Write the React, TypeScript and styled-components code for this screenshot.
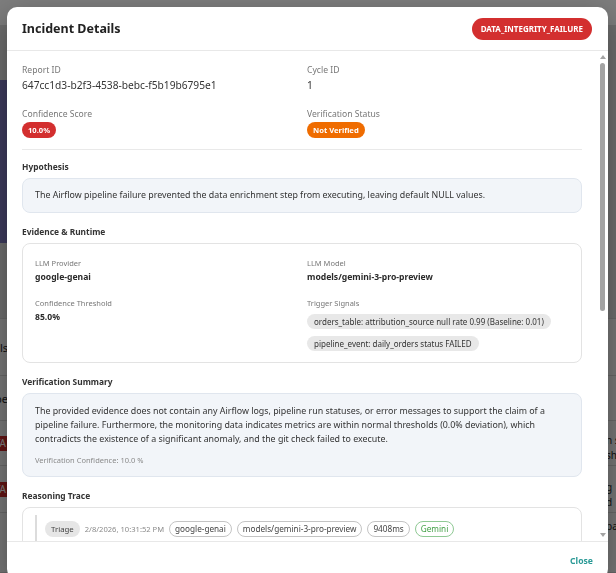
import React from "react";
import styled, { createGlobalStyle } from "styled-components";

const GlobalStyle = createGlobalStyle`
  * { box-sizing: border-box; }
  html, body { margin: 0; padding: 0; height: 100%; overflow: hidden; }
  body { font-family: "Noto Sans", "Open Sans", sans-serif; color: #333; background: #dedede; }
`;

/* ---------- page behind the dialog ---------- */
const BgPage = styled.div`
  height: 573px;
  display: flex;
  flex-direction: column;
  background: #dcdcdc;
  overflow: hidden;
`;
const BgTopBar = styled.div`
  height: 25px;
  flex: none;
  background: #fafafa;
`;
const BgHeroArea = styled.div`
  height: 293px;
  flex: none;
  padding-top: 55px;
  display: flex;
`;
const BgHero = styled.div`
  width: 320px;
  height: 163px;
  background: #7b76ba;
`;
const BgTable = styled.div`
  flex: 1;
  display: flex;
  flex-direction: column;
  background: #eeeeee;
  border-top: 1px solid #cfcfcf;
`;
const BgRow = styled.div<{ $h: number }>`
  height: ${(p) => p.$h}px;
  flex: none;
  display: grid;
  grid-template-columns: 8px 598px 10px;
  align-items: center;
  border-bottom: 1px solid #cfcfcf;
  font-size: 11px;
  color: #222;
`;
const BgStub = styled.div`
  overflow: hidden;
  display: flex;
  justify-content: flex-end;
  white-space: nowrap;
`;
const BgRedTag = styled.span`
  background: #c62828;
  color: #fff;
  font-size: 10px;
  line-height: 15px;
  padding: 0 2px 0 4px;
  white-space: nowrap;
`;
const BgRight = styled.div<{ $top?: number }>`
  align-self: start;
  padding-top: ${(p) => p.$top ?? 0}px;
  overflow: hidden;
  white-space: nowrap;
  font-size: 10px;
  line-height: 15px;
`;

/* ---------- dialog ---------- */
const Overlay = styled.div`
  position: fixed;
  inset: 0;
  background: rgba(0, 0, 0, 0.5);
`;
const Dialog = styled.div`
  position: fixed;
  top: 7px;
  left: 7px;
  width: 601px;
  height: 572px;
  background: #fff;
  border-radius: 10px;
  display: flex;
  flex-direction: column;
  overflow: hidden;
  box-shadow: 0 10px 30px rgba(0, 0, 0, 0.35);
`;
const Header = styled.header`
  flex: none;
  height: 44px;
  display: flex;
  align-items: center;
  justify-content: space-between;
  padding: 0 16px 0 15px;
  border-bottom: 1px solid #e8e8e8;
`;
const Title = styled.h2`
  margin: 0;
  font-size: 12.5px;
  font-weight: 700;
  color: #222;
`;
const TypeBadge = styled.span`
  height: 22px;
  padding: 0 9px;
  border-radius: 11px;
  background: #d32f2f;
  color: #fff;
  font-size: 8px;
  font-weight: 700;
  display: inline-flex;
  align-items: center;
`;

const Main = styled.div`
  flex: 1;
  min-height: 0;
  display: flex;
`;
const Body = styled.div`
  flex: 1;
  min-width: 0;
  overflow: hidden;
  padding: 13px 15px 16px 15px;
  display: flex;
  flex-direction: column;
`;

/* drawn scrollbar */
const Rail = styled.div`
  flex: none;
  width: 11px;
  display: flex;
  flex-direction: column;
  align-items: center;
`;
const RailArrow = styled.div<{ $dir: "up" | "down" }>`
  flex: none;
  height: 12px;
  display: flex;
  align-items: center;
  justify-content: center;
  &::before {
    content: "";
    width: 0;
    height: 0;
    border-left: 3px solid transparent;
    border-right: 3px solid transparent;
    ${(p) => (p.$dir === "up" ? "border-bottom" : "border-top")}: 4px solid #a3a3a3;
  }
`;
const RailThumb = styled.div`
  flex: none;
  width: 5px;
  border-radius: 3px;
  background: #a3a3a3;
`;
const RailSpace = styled.div`
  flex: 1;
`;

const InfoGrid = styled.div<{ $rowGap: number }>`
  display: grid;
  grid-template-columns: 1fr 1fr;
  column-gap: 10px;
  row-gap: ${(p) => p.$rowGap}px;
  align-items: start;
`;
const Field = styled.div`
  display: flex;
  flex-direction: column;
  align-items: flex-start;
  gap: 1px;
`;
const FieldLabel = styled.span<{ $small?: boolean }>`
  font-size: ${(p) => (p.$small ? 7.5 : 8.6)}px;
  line-height: ${(p) => (p.$small ? 12 : 13)}px;
  color: #777;
`;
const FieldValue = styled.span<{ $strong?: boolean }>`
  font-size: ${(p) => (p.$strong ? 8.6 : 10.2)}px;
  font-weight: ${(p) => (p.$strong ? 700 : 400)};
  line-height: 15px;
  color: ${(p) => (p.$strong ? "#2a2a2a" : "#333")};
`;
const StatusPill = styled.span<{ $tone: "red" | "orange" }>`
  height: 16px;
  padding: 0 6px;
  border-radius: 8px;
  font-size: 7.6px;
  font-weight: 700;
  color: #fff;
  display: inline-flex;
  align-items: center;
  background: ${(p) => (p.$tone === "red" ? "#d32f2f" : "#ef6c00")};
`;
const Divider = styled.hr`
  border: 0;
  flex: none;
  height: 1px;
  background: #e9e9e9;
  margin: 11px 0 10px;
`;

const Sections = styled.div`
  display: flex;
  flex-direction: column;
  gap: 12px;
`;
const Section = styled.section`
  display: flex;
  flex-direction: column;
  gap: 4px;
`;
const SectionTitle = styled.h3`
  margin: 0;
  font-size: 8.4px;
  line-height: 14px;
  font-weight: 700;
  color: #333;
`;
const TintBox = styled.div`
  background: #f2f5f9;
  border: 1px solid #e0e6ee;
  border-radius: 8px;
  padding: 10px 12px;
`;
const BoxText = styled.p<{ $lh: number }>`
  margin: 0;
  font-size: 8.85px;
  line-height: ${(p) => p.$lh}px;
  color: #333;
`;
const SmallNote = styled.p`
  margin: 7px 0 0;
  font-size: 7.5px;
  line-height: 12px;
  color: #8a8a8a;
`;
const Card = styled.div<{ $pad: string }>`
  background: #fff;
  border: 1px solid #e3e3e3;
  border-radius: 8px;
  padding: ${(p) => p.$pad};
`;
const ChipList = styled.div`
  display: flex;
  flex-direction: column;
  align-items: flex-start;
  gap: 7px;
  margin-top: 4px;
`;
const SignalChip = styled.span`
  height: 15px;
  padding: 0 7px;
  border-radius: 8px;
  background: #e8e8e8;
  color: #333;
  font-size: 8px;
  display: inline-flex;
  align-items: center;
  white-space: nowrap;
`;

const Timeline = styled.div`
  display: flex;
  flex-direction: column;
  gap: 10px;
`;
const TimelineItem = styled.div`
  border-left: 2px solid #dcdcdc;
  padding: 6px 0 6px 8px;
  display: flex;
  flex-direction: column;
  gap: 6px;
`;
const TraceRow = styled.div`
  display: flex;
  align-items: center;
  gap: 5px;
  flex-wrap: wrap;
`;
const StepChip = styled.span`
  height: 16px;
  padding: 0 6px;
  border-radius: 8px;
  background: #e6e6e6;
  color: #444;
  font-size: 7.8px;
  display: inline-flex;
  align-items: center;
`;
const TraceTime = styled.span`
  font-size: 7.6px;
  color: #8a8a8a;
`;
const OutlineChip = styled.span<{ $green?: boolean }>`
  height: 16px;
  padding: 0 5px;
  border-radius: 8px;
  border: 1px solid ${(p) => (p.$green ? "#8fc994" : "#c4c4c4")};
  color: ${(p) => (p.$green ? "#43a047" : "#444")};
  background: #fff;
  font-size: 8.2px;
  display: inline-flex;
  align-items: center;
  white-space: nowrap;
`;
const TraceText = styled.p`
  margin: 0;
  font-size: 8.4px;
  line-height: 14px;
  color: #444;
`;

const Footer = styled.footer`
  flex: none;
  height: 38px;
  border-top: 1px solid #e8e8e8;
  display: flex;
  align-items: center;
  justify-content: flex-end;
  padding: 0 15px;
`;
const CloseButton = styled.button`
  border: 0;
  background: none;
  padding: 0;
  font-family: inherit;
  font-size: 8.6px;
  font-weight: 700;
  color: #2a9a96;
  cursor: pointer;
`;

type TraceStep = {
  step: string;
  time: string;
  ms: string;
  text: string[];
};

const traceSteps: TraceStep[] = [
  {
    step: "Triage",
    time: "2/8/2026, 10:31:52 PM",
    ms: "9408ms",
    text: [
      "Observed a sharp increase in NULL values for orders_table.attribution_source (0.99 vs. baseline 0.01). This coincides with pipeline_event daily_orders reporting status FAILED in the same window.",
      "The most likely cause is an upstream Airflow failure that skipped the enrichment task, so rows were written with default NULL attribution values. Classified as DATA_INTEGRITY_FAILURE pending verification.",
    ],
  },
  {
    step: "Verify",
    time: "2/8/2026, 10:32:04 PM",
    ms: "6121ms",
    text: [
      "Requested Airflow run logs, monitoring metrics and recent git changes for the daily_orders DAG. No Airflow logs or pipeline run statuses were returned by the tools.",
      "Monitoring data reports 0.0% deviation for the tracked metrics. The git check failed to execute, so no code change could be linked to the incident.",
    ],
  },
  {
    step: "Decide",
    time: "2/8/2026, 10:32:11 PM",
    ms: "2874ms",
    text: [
      "Verification confidence (10.0%) is below the configured threshold of 85.0%. The hypothesis is not supported by the available evidence and the report is marked as Not Verified.",
    ],
  },
];

export default function App() {
  return (
    <>
      <GlobalStyle />
      <BgPage>
        <BgTopBar />
        <BgHeroArea>
          <BgHero />
        </BgHeroArea>
        <BgTable>
          <BgRow $h={57}>
            <BgStub>Totals</BgStub>
            <span />
            <BgRight />
          </BgRow>
          <BgRow $h={45}>
            <BgStub>Type</BgStub>
            <span />
            <BgRight />
          </BgRow>
          <BgRow $h={45}>
            <BgStub>
              <BgRedTag>DATA</BgRedTag>
            </BgStub>
            <span />
            <BgRight $top={12}>
              n s
              <br />
              sh
            </BgRight>
          </BgRow>
          <BgRow $h={47}>
            <BgStub>
              <BgRedTag>DATA</BgRedTag>
            </BgStub>
            <span />
            <BgRight $top={14}>
              g
              <br />
              d
            </BgRight>
          </BgRow>
          <BgRow $h={60}>
            <BgStub />
            <span />
            <BgRight $top={6}>pa</BgRight>
          </BgRow>
        </BgTable>
      </BgPage>

      <Overlay />
      <Dialog role="dialog" aria-label="Incident Details">
        <Header>
          <Title>Incident Details</Title>
          <TypeBadge>DATA_INTEGRITY_FAILURE</TypeBadge>
        </Header>

        <Main>
          <Body>
            <InfoGrid $rowGap={15}>
              <Field>
                <FieldLabel>Report ID</FieldLabel>
                <FieldValue>647cc1d3-b2f3-4538-bebc-f5b19b6795e1</FieldValue>
              </Field>
              <Field>
                <FieldLabel>Cycle ID</FieldLabel>
                <FieldValue>1</FieldValue>
              </Field>
              <Field>
                <FieldLabel>Confidence Score</FieldLabel>
                <StatusPill $tone="red">10.0%</StatusPill>
              </Field>
              <Field>
                <FieldLabel>Verification Status</FieldLabel>
                <StatusPill $tone="orange">Not Verified</StatusPill>
              </Field>
            </InfoGrid>

            <Divider />

            <Sections>
              <Section>
                <SectionTitle>Hypothesis</SectionTitle>
                <TintBox>
                  <BoxText $lh={13}>
                    The Airflow pipeline failure prevented the data enrichment step from executing, leaving
                    default NULL values.
                  </BoxText>
                </TintBox>
              </Section>

              <Section>
                <SectionTitle>Evidence &amp; Runtime</SectionTitle>
                <Card $pad="13px 12px 11px">
                  <InfoGrid $rowGap={12}>
                    <Field>
                      <FieldLabel $small>LLM Provider</FieldLabel>
                      <FieldValue $strong>google-genai</FieldValue>
                    </Field>
                    <Field>
                      <FieldLabel $small>LLM Model</FieldLabel>
                      <FieldValue $strong>models/gemini-3-pro-preview</FieldValue>
                    </Field>
                    <Field>
                      <FieldLabel $small>Confidence Threshold</FieldLabel>
                      <FieldValue $strong>85.0%</FieldValue>
                    </Field>
                    <Field>
                      <FieldLabel $small>Trigger Signals</FieldLabel>
                      <ChipList>
                        <SignalChip>orders_table: attribution_source null rate 0.99 (Baseline: 0.01)</SignalChip>
                        <SignalChip>pipeline_event: daily_orders status FAILED</SignalChip>
                      </ChipList>
                    </Field>
                  </InfoGrid>
                </Card>
              </Section>

              <Section>
                <SectionTitle>Verification Summary</SectionTitle>
                <TintBox>
                  <BoxText $lh={14.2}>
                    The provided evidence does not contain any Airflow logs, pipeline run statuses, or error
                    messages to support the claim of a pipeline failure. Furthermore, the monitoring data
                    indicates metrics are within normal thresholds (0.0% deviation), which contradicts the
                    existence of a significant anomaly, and the git check failed to execute.
                  </BoxText>
                  <SmallNote>Verification Confidence: 10.0 %</SmallNote>
                </TintBox>
              </Section>

              <Section>
                <SectionTitle>Reasoning Trace</SectionTitle>
                <Card $pad="7px 12px 8px">
                  <Timeline>
                    {traceSteps.map((s) => (
                      <TimelineItem key={s.step}>
                        <TraceRow>
                          <StepChip>{s.step}</StepChip>
                          <TraceTime>{s.time}</TraceTime>
                          <OutlineChip>google-genai</OutlineChip>
                          <OutlineChip>models/gemini-3-pro-preview</OutlineChip>
                          <OutlineChip>{s.ms}</OutlineChip>
                          <OutlineChip $green>Gemini</OutlineChip>
                        </TraceRow>
                        {s.text.map((t, i) => (
                          <TraceText key={i}>{t}</TraceText>
                        ))}
                      </TimelineItem>
                    ))}
                  </Timeline>
                </Card>
              </Section>
            </Sections>
          </Body>

          <Rail aria-hidden="true">
            <RailArrow $dir="up" />
            <RailThumb style={{ height: 248 }} />
            <RailSpace />
            <RailArrow $dir="down" />
          </Rail>
        </Main>

        <Footer>
          <CloseButton type="button">Close</CloseButton>
        </Footer>
      </Dialog>
    </>
  );
}
